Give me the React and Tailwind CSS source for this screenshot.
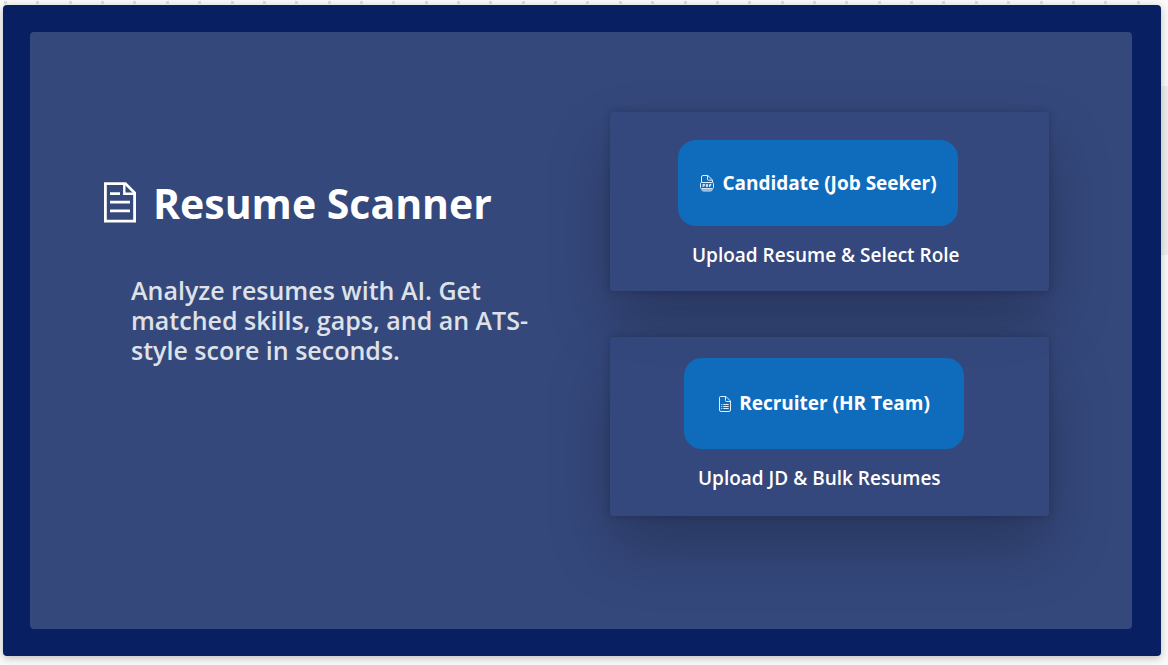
import React from "react";

function DocumentIcon() {
  return (
    <svg aria-hidden="true" viewBox="0 0 32 42" className="h-[42px] w-8 shrink-0" fill="none" stroke="white">
      <path d="M1.4 1.6H21.4L30.6 10.8V39.2H1.4Z" strokeWidth="2.8" />
      <path d="M20.3 1.5V11.7H30.5" strokeWidth="2.4" />
      <path d="M6 11.6H16M6 20.2H26M6 28.8H26" strokeWidth="2.8" />
    </svg>
  );
}

function PdfIcon() {
  return (
    <svg aria-hidden="true" viewBox="0 0 16 18" className="h-[18px] w-4 shrink-0" fill="none" stroke="#e3eefa">
      <path d="M2.5 8V3Q2.5 1.5 4 1.5H8.8L13.5 6V8" strokeWidth="1" />
      <path d="M8.5 1.5V5.2Q8.5 6.2 9.5 6.2H13.5" strokeWidth="1" />
      <path d="M2.5 8.5H13.5Q14.5 8.5 14.5 9.5V13.5Q14.5 14.5 13.5 14.5H2.5Q1.5 14.5 1.5 13.5V9.5Q1.5 8.5 2.5 8.5Z" strokeWidth="1" />
      <path d="M4 13V10.4H5.6V11.8H4M7.4 10.4V12.6H8.6V10.4ZM10.6 13V10.4H12.4M10.6 11.7H12" strokeWidth="1" />
      <path d="M2.5 15.2Q2.7 17.2 4.5 17.2H11.5Q13.3 17.2 13.5 15.2Z" fill="#9ec4e5" stroke="#9ec4e5" strokeWidth="0.8" />
    </svg>
  );
}

function ListDocumentIcon() {
  return (
    <svg aria-hidden="true" viewBox="0 0 14 18" className="h-[18px] w-3.5 shrink-0" fill="none" stroke="#e3eefa">
      <path d="M2.5 1.5H8L12.5 6V15Q12.5 16.5 11 16.5H3Q1.5 16.5 1.5 15V2.5Q1.5 1.5 2.5 1.5Z" />
      <path d="M7.5 1.5V5.5Q7.5 6.5 8.5 6.5H12.5" />
      <path d="M3.3 9.5H4.3M5.3 9.5H10.7M3.3 11.5H4.3M5.3 11.5H10.7M3.3 13.5H4.3M5.3 13.5H10.7" />
    </svg>
  );
}

const cardClass =
  "flex h-[179px] flex-col items-start rounded bg-[#35487d]/75 shadow-[0_0_8px_rgba(0,0,0,0.2),0_32px_64px_rgba(0,0,0,0.24)]";
const buttonClass =
  "flex w-[280px] items-center justify-center gap-[7px] rounded-[18px] bg-[#0f6cbd] text-[19px] font-bold";
const captionClass = "mt-[15px] ml-3.5 text-[19px] leading-7 font-semibold";

export default function App() {
  return (
    <div className="relative min-h-screen bg-[#fafafa] pr-[7px] pb-[9px] pl-[3px] font-['Open_Sans','Noto_Sans',sans-serif] text-white">
      <div aria-hidden="true" className="flex h-[5px] justify-between pt-px pr-[21px] pl-px">
        {Array.from({ length: 36 }, (_, i) => (
          <span key={i} className="size-[3px] bg-[#dedede]" />
        ))}
      </div>
      <div aria-hidden="true" className="absolute top-[86px] right-0 h-[169px] w-[7px] bg-[#eeeeee]" />
      <main className="relative flex min-h-[calc(100vh-14px)] rounded bg-[#081f61] p-[27px] pr-[29px] shadow-[0_2px_8px_rgba(0,0,0,0.25)]">
        <div className="flex flex-1 justify-between rounded bg-[#35487c] pt-20 pr-[83px] pl-[74px]">
          <section className="w-[440px] pt-16">
            <h1 className="flex items-center gap-[17px] text-[41px] leading-[54px] font-bold">
              <DocumentIcon />
              Resume Scanner
            </h1>
            <p className="mt-[45px] ml-[27px] text-[25px] leading-[30px] font-semibold text-[#dfe1e8]">
              Analyze resumes with AI. Get matched skills, gaps, and an ATS-style score in seconds.
            </p>
          </section>
          <section className="flex w-[439px] flex-col gap-[46px]">
            <div className={cardClass + " pt-7 pl-[68px]"}>
              <button type="button" className={buttonClass + " h-[86px]"}>
                <PdfIcon />
                Candidate (Job Seeker)
              </button>
              <p className={captionClass}>Upload Resume &amp; Select Role</p>
            </div>
            <div className={cardClass + " pt-[21px] pl-[74px]"}>
              <button type="button" className={buttonClass + " h-[91px]"}>
                <ListDocumentIcon />
                Recruiter (HR Team)
              </button>
              <p className={captionClass}>Upload JD &amp; Bulk Resumes</p>
            </div>
          </section>
        </div>
      </main>
    </div>
  );
}
